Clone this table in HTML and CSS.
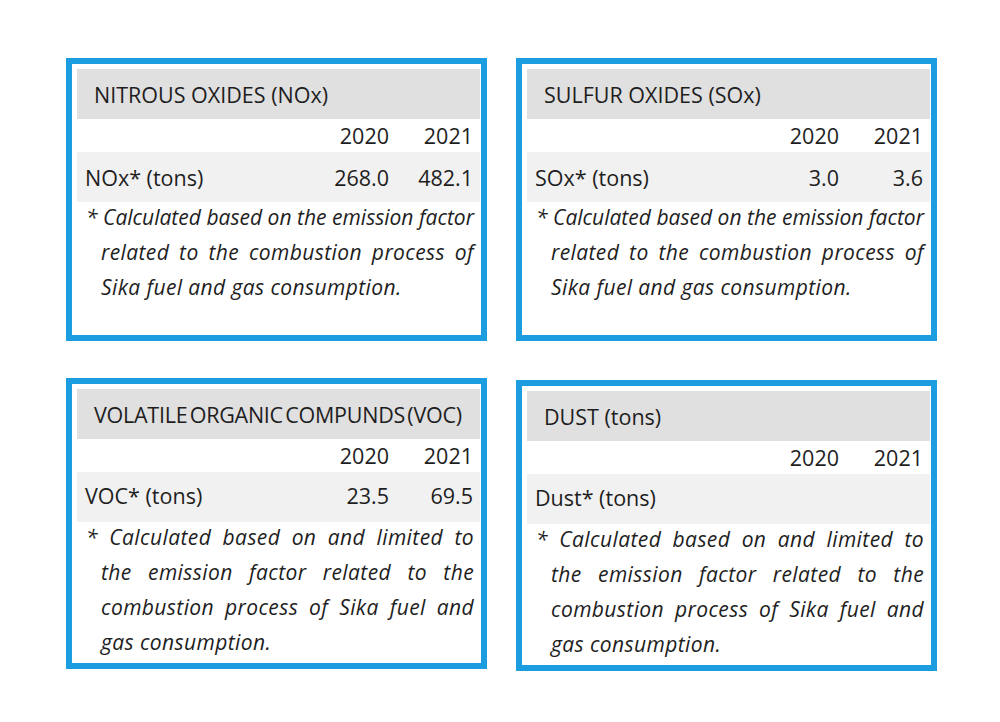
FILE: index.html
```html
<!DOCTYPE html>
<html lang="en">
<head>
<meta charset="utf-8">
<title>Emissions</title>
<link rel="stylesheet" href="styles.css">
</head>
<body>
<div class="grid">
  <section class="card card-short">
    <div class="head">NITROUS OXIDES (NOx)</div>
    <div class="row years"><span class="label"></span><span class="val">2020</span><span class="val">2021</span></div>
    <div class="row data"><span class="label">NOx* (tons)</span><span class="val">268.0</span><span class="val">482.1</span></div>
    <div class="note">
      <span class="ln first tight">* Calculated based on the emission factor</span>
      <span class="ln">related to the combustion process of</span>
      <span class="ln last">Sika fuel and gas consumption.</span>
    </div>
  </section>
  <section class="card card-short">
    <div class="head">SULFUR OXIDES (SOx)</div>
    <div class="row years"><span class="label"></span><span class="val">2020</span><span class="val">2021</span></div>
    <div class="row data"><span class="label">SOx* (tons)</span><span class="val">3.0</span><span class="val">3.6</span></div>
    <div class="note">
      <span class="ln first tight">* Calculated based on the emission factor</span>
      <span class="ln">related to the combustion process of</span>
      <span class="ln last">Sika fuel and gas consumption.</span>
    </div>
  </section>
  <section class="card card-tall">
    <div class="head head-tight">VOLATILE ORGANIC COMPUNDS (VOC)</div>
    <div class="row years"><span class="label"></span><span class="val">2020</span><span class="val">2021</span></div>
    <div class="row data"><span class="label">VOC* (tons)</span><span class="val">23.5</span><span class="val">69.5</span></div>
    <div class="note">
      <span class="ln first">* Calculated based on and limited to</span>
      <span class="ln">the emission factor related to the</span>
      <span class="ln">combustion process of Sika fuel and</span>
      <span class="ln last">gas consumption.</span>
    </div>
  </section>
  <section class="card card-tall card-low">
    <div class="head">DUST (tons)</div>
    <div class="row years"><span class="label"></span><span class="val">2020</span><span class="val">2021</span></div>
    <div class="row data"><span class="label">Dust* (tons)</span><span class="val"></span><span class="val"></span></div>
    <div class="note">
      <span class="ln first">* Calculated based on and limited to</span>
      <span class="ln">the emission factor related to the</span>
      <span class="ln">combustion process of Sika fuel and</span>
      <span class="ln last">gas consumption.</span>
    </div>
  </section>
</div>
</body>
</html>
```

FILE: styles.css
```css
html, body {
  margin: 0;
  padding: 0;
  background: #ffffff;
}
body {
  font-family: "Open Sans", "DejaVu Sans", sans-serif;
  font-weight: 500;
  color: #1e1e1e;
  width: 1000px;
  height: 722px;
  overflow: hidden;
}
.grid {
  display: grid;
  grid-template-columns: 421px 421px;
  column-gap: 29px;
  row-gap: 37px;
  align-items: start;
  padding: 58px 0 0 66px;
}
.card {
  box-sizing: border-box;
  border: 6px solid #1b9de0;
  padding: 5px 1px 3px 5px;
  background: #ffffff;
}
.card-short {
  height: 283px;
}
.card-low {
  margin-top: 2px;
}
.head {
  height: 50px;
  display: flex;
  align-items: center;
  padding-left: 17px;
  background: #e0e0e0;
  font-size: 21.5px;
  white-space: nowrap;
}
.head-tight {
  letter-spacing: -0.25px;
  word-spacing: -3px;
}
.row {
  display: flex;
  align-items: center;
  padding: 0 7px 0 8px;
  font-size: 21.5px;
}
.row.years {
  height: 33px;
  background: #ffffff;
}
.row.data {
  height: 50px;
  background: #f1f1f1;
}
.card-tall .row.data {
  box-sizing: border-box;
  padding-bottom: 4px;
}
.label {
  flex: 1;
}
.val {
  width: 84px;
  text-align: right;
}
.note {
  margin-top: -2px;
  padding: 0 6px 0 24px;
  font-style: italic;
  font-size: 21px;
  line-height: 35px;
  letter-spacing: 0.4px;
}
.ln {
  display: block;
  text-align: justify;
  text-align-last: justify;
  white-space: nowrap;
}
.ln.first {
  margin-left: -15px;
}
.ln.tight {
  letter-spacing: 0;
  word-spacing: -3px;
}
.ln.last {
  text-align-last: left;
}
```
